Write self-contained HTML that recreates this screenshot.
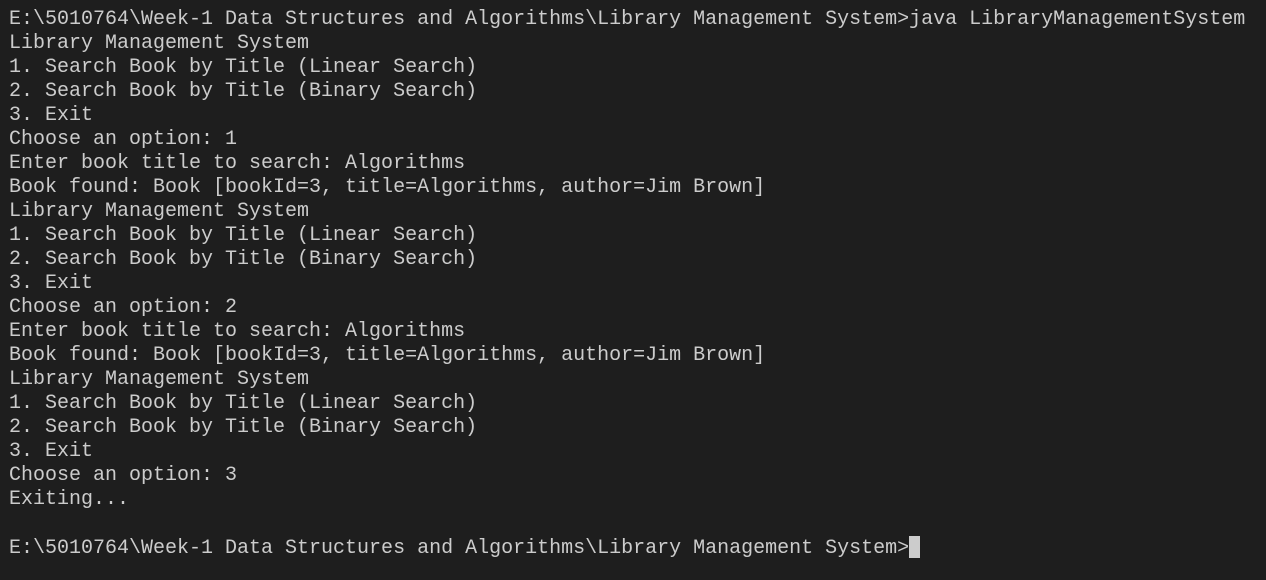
<!DOCTYPE html>
<html><head><style>
html,body{margin:0;padding:0;background:#1e1e1e;width:1266px;height:580px;overflow:hidden}
pre{margin:0;position:absolute;left:9px;top:8px;font-family:"Liberation Mono","DejaVu Sans Mono",monospace;font-size:20px;line-height:24px;color:#cccccc}
.c{display:inline-block;width:11px;height:22px;background:#cccccc;vertical-align:-5px}
</style></head><body><pre>E:\5010764\Week-1 Data Structures and Algorithms\Library Management System>java LibraryManagementSystem
Library Management System
1. Search Book by Title (Linear Search)
2. Search Book by Title (Binary Search)
3. Exit
Choose an option: 1
Enter book title to search: Algorithms
Book found: Book [bookId=3, title=Algorithms, author=Jim Brown]
Library Management System
1. Search Book by Title (Linear Search)
2. Search Book by Title (Binary Search)
3. Exit
Choose an option: 2
Enter book title to search: Algorithms
Book found: Book [bookId=3, title=Algorithms, author=Jim Brown]
Library Management System
1. Search Book by Title (Linear Search)
2. Search Book by Title (Binary Search)
3. Exit
Choose an option: 3
Exiting...

E:\5010764\Week-1 Data Structures and Algorithms\Library Management System><span class="c"></span></pre></body></html>
